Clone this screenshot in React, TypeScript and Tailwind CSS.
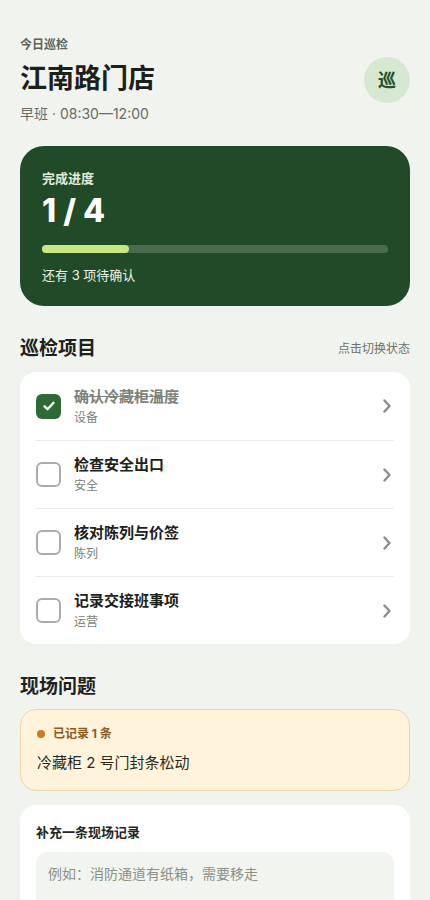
import React, { useState } from "react";

const items = [
  { title: "确认冷藏柜温度", tag: "设备", done: true },
  { title: "检查安全出口", tag: "安全", done: false },
  { title: "核对陈列与价签", tag: "陈列", done: false },
  { title: "记录交接班事项", tag: "运营", done: false },
];

function Chevron() {
  return (
    <svg width="10" height="16" viewBox="0 0 10 16" fill="none">
      <path d="M2.5 2.5 L7.5 8 L2.5 13.5" stroke="#8a8f88" strokeWidth="2.4" strokeLinecap="round" strokeLinejoin="round" />
    </svg>
  );
}

export default function App() {
  const [list, setList] = useState(items);
  const done = list.filter((i) => i.done).length;
  return (
    <div
      className="min-h-[900px] bg-[#f1f3ef] px-5 pt-[36px] pb-10 text-[#1c211b]"
      style={{ fontFamily: "Inter, 'Noto Sans CJK SC', sans-serif" }}
    >
      <div className="flex items-start justify-between">
        <div>
          <div className="text-[12px] font-semibold leading-[18px] text-[#5d635a]">今日巡检</div>
          <div className="mt-[8px] text-[27px] font-bold leading-[34px] text-[#1b201a]">江南路门店</div>
          <div className="mt-[8px] text-[14px] leading-[20px] text-[#676c65]">早班 · 08:30—12:00</div>
        </div>
        <div className="mt-[21px] flex h-[46px] w-[46px] items-center justify-center rounded-full bg-[#d6e8d1] text-[18px] font-bold text-[#24502b]">
          巡
        </div>
      </div>

      <div className="mt-[22px] rounded-[24px] bg-[#214a28] px-[22px] pt-[23px] pb-[22px]">
        <div className="text-[13px] font-semibold leading-[18px] text-[#e2ebdc]">完成进度</div>
        <div className="mt-[6px] text-[32px] font-extrabold leading-[36px] text-white">
          {done} / {list.length}
        </div>
        <div className="mt-[16px] h-[8px] w-full rounded-full bg-[#4a6b4d]">
          <div className="h-full rounded-full bg-[#c9e682]" style={{ width: `${(done / list.length) * 100}%` }} />
        </div>
        <div className="mt-[13px] text-[13px] leading-[18px] text-[#eef3ea]">还有 {list.length - done} 项待确认</div>
      </div>

      <div className="mt-[30px] flex items-center justify-between">
        <div className="text-[19px] font-bold leading-[26px]">巡检项目</div>
        <div className="text-[12px] leading-[16px] text-[#6d726a]">点击切换状态</div>
      </div>

      <div className="mt-[10px] rounded-[16px] bg-white px-4">
        {list.map((it, idx) => (
          <div
            key={it.title}
            onClick={() => setList(list.map((x, j) => (j === idx ? { ...x, done: !x.done } : x)))}
            className={`flex h-[68px] cursor-pointer items-center ${idx > 0 ? "border-t border-[#ebedea]" : ""}`}
          >
            {it.done ? (
              <div className="flex h-[25px] w-[25px] items-center justify-center rounded-[6px] bg-[#2e6a35]">
                <svg width="14" height="14" viewBox="0 0 14 14" fill="none">
                  <path d="M2.5 7.3 L5.6 10.2 L11.5 3.8" stroke="white" strokeWidth="2.4" strokeLinecap="round" strokeLinejoin="round" />
                </svg>
              </div>
            ) : (
              <div className="h-[25px] w-[25px] rounded-[6px] border-2 border-[#a9ada7] bg-white" />
            )}
            <div className="ml-[13px] flex-1">
              <div
                className={`text-[15px] font-bold leading-[20px] ${
                  it.done ? "text-[#7d827a] line-through decoration-[#7d827a]" : "text-[#1c211b]"
                }`}
              >
                {it.title}
              </div>
              <div className="mt-[3px] text-[12px] leading-[16px] text-[#7a7f78]">{it.tag}</div>
            </div>
            <div className="mr-[2px]">
              <Chevron />
            </div>
          </div>
        ))}
      </div>

      <div className="mt-[30px] text-[19px] font-bold leading-[26px]">现场问题</div>

      <div className="mt-[9px] rounded-[16px] border border-[#ecd6a8] bg-[#fff3dc] px-4 pt-[16px] pb-[16px]">
        <div className="flex items-center">
          <div className="h-[8px] w-[8px] rounded-full bg-[#cc7a1c]" />
          <div className="ml-[8px] text-[12px] font-bold leading-[16px] text-[#8a5b22]">已记录 1 条</div>
        </div>
        <div className="mt-[10px] text-[15px] leading-[22px] text-[#2a2a24]">冷藏柜 2 号门封条松动</div>
      </div>

      <div className="mt-[14px] rounded-[16px] bg-white px-4 pt-[18px] pb-4">
        <div className="text-[13px] font-bold leading-[18px] text-[#22271f]">补充一条现场记录</div>
        <div className="mt-[11px] h-[80px] rounded-[12px] bg-[#f2f4f0] px-3 pt-[12px] text-[14px] leading-[20px] text-[#8b9088]">
          例如：消防通道有纸箱，需要移走
        </div>
      </div>
    </div>
  );
}
